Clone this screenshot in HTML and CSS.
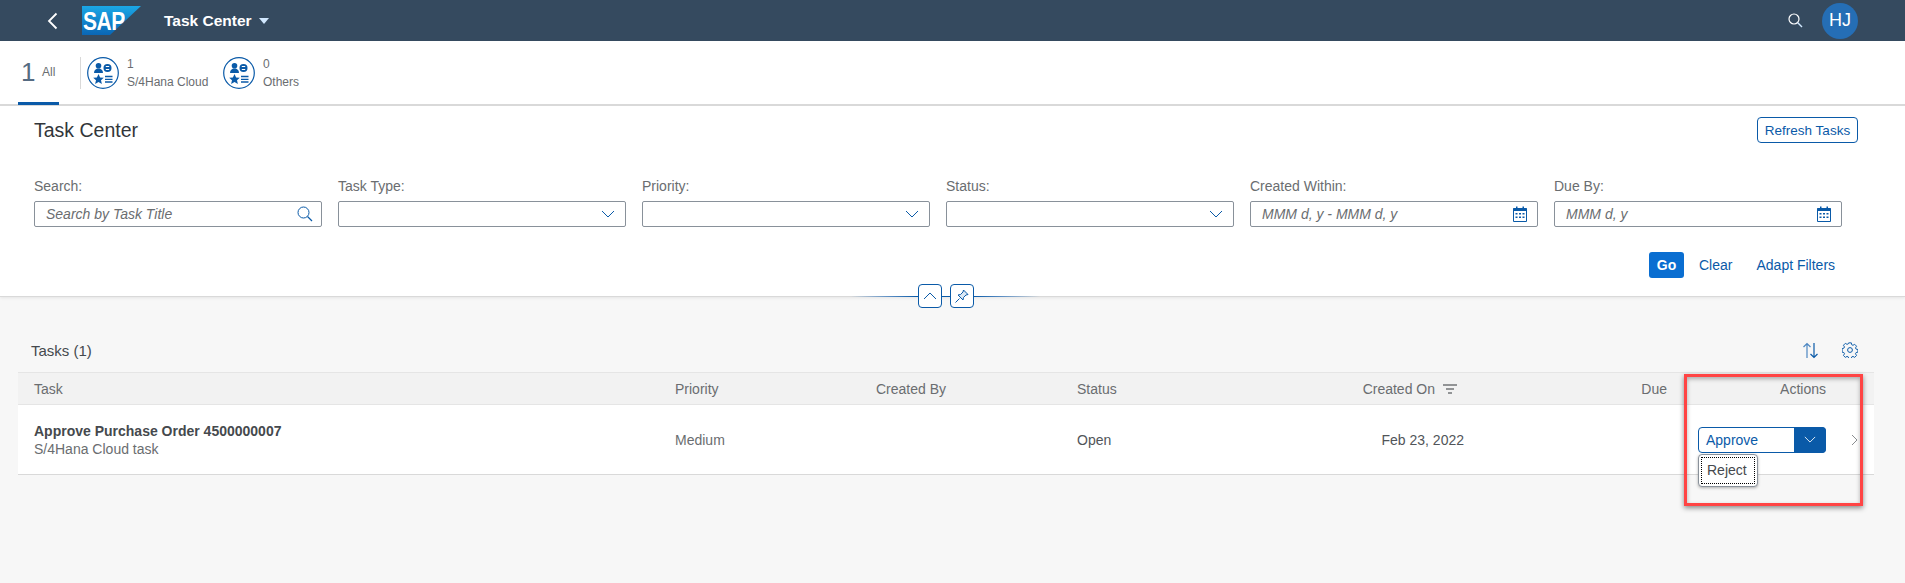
FILE: index.html
```html
<!DOCTYPE html>
<html>
<head>
  <title>Task Center</title>
  <link rel="stylesheet" href="styles.css">
</head>
<body>
  <svg class="icon-defs" width="0" height="0">
    <defs>
      <linearGradient id="sap-blue" x1="0" y1="0" x2="0" y2="1">
        <stop offset="0" stop-color="#1ba7e6"/>
        <stop offset="1" stop-color="#0a66b5"/>
      </linearGradient>
      <symbol id="calendar" viewBox="0 0 14 16">
        <path d="M.5 2.500h13v13H.5z" fill="none" stroke="#0a5aa8"/>
        <path d="M.5 2h13v3H.5zM3 .5h1.500v2H3zM9.500 .5H11v2H9.500z" fill="#0a5aa8"/>
        <path d="M2.500 7h2v1.500h-2zM6 7h2v1.500H6zM9.500 7h2v1.500h-2zM2.500 10.500h2V12h-2zM6 10.500h2V12H6zM9.500 10.500h2V12h-2z" fill="#0a5aa8"/>
      </symbol>
      <symbol id="chevron-down" viewBox="0 0 14 8">
        <path d="M1 1l6 6 6-6" fill="none" stroke="currentColor" stroke-width="1"/>
      </symbol>
      <symbol id="tab-people" viewBox="0 0 32 32">
        <circle cx="16" cy="16" r="15.300" fill="#fff" stroke="#0a5aa8" stroke-width="1.200"/>
        <circle cx="11.500" cy="8.800" r="2.800" fill="#0a5aa8"/>
        <path d="M7 16c0-3 1.800-4.500 4.500-4.500S16 13 16 16z" fill="#0a5aa8"/>
        <circle cx="20.500" cy="11" r="4" fill="#0a5aa8"/>
        <path d="M18.800 9.500h3.400M18.800 12.500h3.400" stroke="#fff" stroke-width="1"/>
        <path d="M11.500 17l1.600 3.500 3.700.3-2.800 2.500.9 3.700-3.400-2-3.400 2 .9-3.700-2.800-2.500 3.700-.3z" fill="#0a5aa8"/>
        <path d="M18 19.500h7.500M18 22.300h7.500M18 25h7.500" stroke="#0a5aa8" stroke-width="1.300"/>
      </symbol>
    </defs>
  </svg>

  <header class="shell-bar">
    <svg class="shell-back" width="11" height="18" viewBox="0 0 11 18"><path d="M9.500 1.500L2 9l7.500 7.500" fill="none" stroke="#fff" stroke-width="1.800"/></svg>
    <div class="sap-logo">
      <svg width="59" height="29" viewBox="0 0 59 29"><path d="M0 0h59L28 29H0z" fill="url(#sap-blue)"/></svg>
      <span class="sap-word">SAP</span>
    </div>
    <span class="shell-title">Task Center</span>
    <span class="shell-caret"></span>
    <svg class="shell-search" width="15" height="15" viewBox="0 0 15 15"><circle cx="6" cy="6" r="5" fill="none" stroke="#fff" stroke-width="1.200"/><path d="M9.500 9.500l4.500 4.500" stroke="#d1e8ff" stroke-width="1.400"/></svg>
    <div class="avatar">HJ</div>
  </header>

  <nav class="tab-bar">
    <div class="tab-all">
      <span class="tab-count">1</span>
      <span class="tab-label">All</span>
    </div>
    <div class="tab-sep"></div>
    <div class="tab-item">
      <svg width="32" height="32"><use href="#tab-people"/></svg>
      <div class="tab-text"><span>1</span><span>S/4Hana Cloud</span></div>
    </div>
    <div class="tab-item">
      <svg width="32" height="32"><use href="#tab-people"/></svg>
      <div class="tab-text"><span>0</span><span>Others</span></div>
    </div>
  </nav>

  <section class="filter-panel">
    <div class="panel-head">
      <h1>Task Center</h1>
      <button class="btn-outline">Refresh Tasks</button>
    </div>
    <div class="filter-grid">
      <div class="field">
        <label>Search:</label>
        <div class="input"><span class="placeholder">Search by Task Title</span>
          <svg class="input-search" width="16" height="16" viewBox="0 0 16 16"><circle cx="6.500" cy="6.500" r="5.500" fill="none" stroke="#0a5aa8" stroke-width="1"/><path d="M10.500 10.500l4.500 4.500" stroke="#0a5aa8" stroke-width="1.300"/></svg>
        </div>
      </div>
      <div class="field">
        <label>Task Type:</label>
        <div class="input"><span></span><svg class="input-caret" width="14" height="8"><use href="#chevron-down"/></svg></div>
      </div>
      <div class="field">
        <label>Priority:</label>
        <div class="input"><span></span><svg class="input-caret" width="14" height="8"><use href="#chevron-down"/></svg></div>
      </div>
      <div class="field">
        <label>Status:</label>
        <div class="input"><span></span><svg class="input-caret" width="14" height="8"><use href="#chevron-down"/></svg></div>
      </div>
      <div class="field">
        <label>Created Within:</label>
        <div class="input"><span class="placeholder">MMM d, y - MMM d, y</span><svg class="input-cal" width="14" height="16"><use href="#calendar"/></svg></div>
      </div>
      <div class="field">
        <label>Due By:</label>
        <div class="input"><span class="placeholder">MMM d, y</span><svg class="input-cal" width="14" height="16"><use href="#calendar"/></svg></div>
      </div>
    </div>
    <div class="filter-actions">
      <button class="btn-go">Go</button>
      <a class="link">Clear</a>
      <a class="link">Adapt Filters</a>
    </div>
  </section>

  <div class="collapse-bar">
    <button class="btn-square">
      <svg width="14" height="8" viewBox="0 0 14 8"><path d="M1 7l6-6 6 6" fill="none" stroke="#0a5aa8"/></svg>
    </button>
    <button class="btn-square">
      <svg width="14" height="14" viewBox="0 0 14 14"><path d="M8.500 1l4.500 4.500-2 .5-2.500 2.500-.5 2.500-5-5 2.500-.5L8 3z" fill="#dbe8f5" stroke="#0a5aa8"/><path d="M4.500 9.500L.5 13.500" stroke="#0a5aa8"/></svg>
    </button>
  </div>

  <main class="tasks">
    <div class="tasks-head">
      <span class="tasks-title">Tasks (1)</span>
      <div class="tasks-tools">
        <svg width="17" height="17" viewBox="0 0 17 17"><path d="M5 16V1.500M1.500 5L5 1.500 8.500 5" fill="none" stroke="#4d87c2" stroke-width="1.200"/><path d="M12 1v14.500M8.500 12l3.500 3.500 3.500-3.500" fill="none" stroke="#0a5aa8" stroke-width="1.200"/></svg>
        <svg width="16" height="16" viewBox="0 0 16 16"><path d="M6.600.7h2.800l.4 2 1.300.6 1.800-1.100 2 2-1.100 1.800.6 1.300 2 .4v0l-.1 2.800-1.900.4-.6 1.300 1.100 1.800-2 2-1.800-1.100-1.300.6-.4 1.900H6.600l-.4-1.900-1.300-.6-1.800 1.100-2-2 1.100-1.800-.6-1.300-1.900-.4V6.700l1.900-.4.600-1.300-1.100-1.800 2-2 1.800 1.100 1.300-.6z" fill="none" stroke="#0a5aa8" stroke-width="1" transform="translate(.4 .2) scale(.95)"/><circle cx="8" cy="8" r="2.400" fill="none" stroke="#0a5aa8"/></svg>
      </div>
    </div>
    <div class="table">
      <div class="row row-head">
        <div class="cell">Task</div>
        <div class="cell">Priority</div>
        <div class="cell">Created By</div>
        <div class="cell">Status</div>
        <div class="cell cell-right cell-created">Created On
          <svg width="14" height="10" viewBox="0 0 14 10"><path d="M0 1h14M3 5h8M5 9h4" stroke="#32363a" stroke-width="1.200"/></svg>
        </div>
        <div class="cell cell-right cell-due">Due</div>
        <div class="cell cell-right cell-actions">Actions</div>
        <div class="cell"></div>
      </div>
      <div class="row row-body">
        <div class="cell task-name"><strong>Approve Purchase Order 4500000007</strong><span>S/4Hana Cloud task</span></div>
        <div class="cell">Medium</div>
        <div class="cell"></div>
        <div class="cell cell-open">Open</div>
        <div class="cell cell-right cell-date">Feb 23, 2022</div>
        <div class="cell"></div>
        <div class="cell cell-right">
          <div class="split-btn">
            <span class="split-text">Approve</span>
            <span class="split-arrow"><svg width="12" height="7"><use href="#chevron-down"/></svg></span>
            <div class="split-menu"><span>Reject</span></div>
          </div>
        </div>
        <div class="cell cell-nav">
          <svg width="7" height="12" viewBox="0 0 7 12"><path d="M1 1l5 5-5 5" fill="none" stroke="#8a8d90"/></svg>
        </div>
      </div>
    </div>
  </main>

  <div class="highlight-box"></div>
</body>
</html>
```

FILE: styles.css
```css
html, body {
  margin: 0;
  padding: 0;
}

body {
  position: relative;
  height: 583px;
  overflow: hidden;
  background-color: #f7f7f7;
  font-family: "Liberation Sans", Arial, sans-serif;
  font-size: 14px;
  color: #32363a;
}

button {
  font-family: inherit;
  cursor: pointer;
}

.icon-defs {
  position: absolute;
}

/* top bar */
.shell-bar {
  display: flex;
  align-items: center;
  height: 41px;
  padding: 0 47px 0 47px;
  background-color: #354a5f;
  color: #fff;
}

.shell-back {
  margin-right: 24px;
}

.sap-logo {
  position: relative;
  width: 59px;
  height: 29px;
  margin-right: 23px;
}

.sap-word {
  position: absolute;
  left: 1px;
  top: 2px;
  font-size: 25px;
  line-height: 26px;
  font-weight: bold;
  letter-spacing: -0.5px;
  color: #fff;
  transform: scaleX(0.84);
  transform-origin: left center;
}

.shell-title {
  font-size: 15.500px;
  font-weight: bold;
}

.shell-caret {
  width: 0;
  height: 0;
  margin-left: 7px;
  border-left: 5px solid transparent;
  border-right: 5px solid transparent;
  border-top: 6px solid #d1e8ff;
}

.shell-search {
  margin-left: auto;
  margin-right: 19px;
}

.avatar {
  display: flex;
  align-items: center;
  justify-content: center;
  width: 36px;
  height: 36px;
  border-radius: 50%;
  background-color: #256eb5;
  font-size: 18px;
}

/* tabs */
.tab-bar {
  display: flex;
  align-items: center;
  height: 63px;
  background-color: #fff;
  border-bottom: 2px solid #d9d9d9;
  box-sizing: content-box;
  position: relative;
}

.tab-all {
  display: flex;
  align-items: center;
  width: 41px;
  height: 100%;
  margin-left: 18px;
  padding-left: 3px;
  box-sizing: border-box;
  border-bottom: 3px solid #0a5aa8;
  margin-bottom: -2px;
}

.tab-count {
  font-size: 26px;
  color: #556b82;
  width: 21px;
}

.tab-label,
.tab-text {
  font-size: 12px;
  color: #6a6d70;
}

.tab-sep {
  width: 1px;
  height: 32px;
  margin-left: 21px;
  margin-right: 6px;
  background-color: #d9d9d9;
}

.tab-item {
  display: flex;
  align-items: center;
  gap: 8px;
  width: 136px;
}

.tab-text {
  display: flex;
  flex-direction: column;
  gap: 4px;
}

/* filters */
.filter-panel {
  height: 191px;
  padding: 11px 47px 0 34px;
  box-sizing: border-box;
  background-color: #fff;
  border-bottom: 1px solid #d9d9d9;
  box-shadow: 0 1px 3px rgba(0, 0, 0, 0.08);
}

.panel-head {
  display: flex;
  justify-content: space-between;
  align-items: center;
  height: 26px;
}

.panel-head h1 {
  margin: 0;
  font-size: 19.500px;
  font-weight: normal;
  color: #32363a;
}

.btn-outline {
  width: 101px;
  height: 26px;
  padding: 0;
  border: 1px solid #0a5aa8;
  border-radius: 4px;
  background-color: #fff;
  font-size: 13.500px;
  color: #0a5aa8;
}

.filter-grid {
  display: grid;
  grid-template-columns: repeat(6, 288px);
  column-gap: 16px;
  margin-top: 35px;
}

.field label {
  display: block;
  height: 23px;
  font-size: 14px;
  line-height: 16px;
  color: #6a6d70;
}

.input {
  display: flex;
  align-items: center;
  justify-content: space-between;
  height: 26px;
  padding: 0 8px 0 11px;
  box-sizing: border-box;
  border: 1px solid #89919a;
  border-radius: 2px;
  background-color: #fff;
}

.placeholder {
  font-size: 14px;
  font-style: italic;
  color: #6a6d70;
}

.input-caret {
  color: #0a5aa8;
  margin-right: 2px;
}

.input-cal {
  margin-right: 2px;
}

.filter-actions {
  display: flex;
  align-items: center;
  height: 26px;
  margin-top: 25px;
  margin-right: -23px;
  padding-left: 1615px;
}

.btn-go {
  width: 35px;
  height: 26px;
  padding: 0;
  border: none;
  border-radius: 3px;
  background-color: #0a6ed1;
  color: #fff;
  font-size: 14px;
  font-weight: bold;
}

.link {
  font-size: 14px;
  color: #0a5aa8;
}

.btn-go + .link {
  margin-left: 15px;
}

.link + .link {
  margin-left: 24px;
}

.collapse-bar {
  position: relative;
  display: flex;
  justify-content: center;
  gap: 8px;
  height: 24px;
  margin-top: -13px;
  margin-right: 14px;
  background: linear-gradient(90deg, transparent 45%, #5d8fc4 47%, #0a5aa8 48.500%, #0a5aa8 51.500%, #5d8fc4 53%, transparent 55%) no-repeat 0 12px / 100% 1px;
}

.btn-square {
  display: flex;
  align-items: center;
  justify-content: center;
  width: 24px;
  height: 24px;
  padding: 0;
  border: 1px solid #0a5aa8;
  border-radius: 4px;
  background-color: #fff;
}

/* task table */
.tasks {
  padding: 0 31px 0 18px;
}

.tasks-head {
  display: flex;
  justify-content: space-between;
  align-items: center;
  height: 64px;
  padding: 20px 16px 0 13px;
  box-sizing: border-box;
}

.tasks-title {
  font-size: 15px;
  color: #45494d;
}

.tasks-tools {
  display: flex;
  align-items: center;
  gap: 23px;
}

.table {
  position: relative;
}

.row {
  display: grid;
  grid-template-columns: 657px 201px 201px 201px 210px 201px 153px 32px;
  align-items: center;
  box-sizing: border-box;
}

.row-head {
  height: 33px;
  background-color: #f2f2f2;
  border-top: 1px solid #e5e5e5;
  border-bottom: 1px solid #e5e5e5;
  color: #6a6d70;
}

.row-body {
  height: 70px;
  background-color: #fff;
  border-bottom: 1px solid #d9d9d9;
  color: #6a6d70;
}

.cell:first-child {
  padding-left: 16px;
}

.cell-right {
  text-align: right;
}

.cell-created {
  display: flex;
  justify-content: flex-end;
  align-items: center;
  gap: 8px;
  padding-right: 31px;
}

.cell-due {
  padding-right: 22px;
}

.cell-actions {
  padding-right: 16px;
}

.cell-date {
  padding-right: 24px;
  color: #515559;
}

.cell-open {
  color: #515559;
}

.task-name {
  display: flex;
  flex-direction: column;
  gap: 2px;
}

.task-name strong {
  color: #45494d;
}

.split-btn {
  position: relative;
  display: flex;
  width: 128px;
  height: 26px;
  margin-left: 9px;
  box-sizing: border-box;
  border: 1px solid #0a5aa8;
  border-radius: 4px;
  background-color: #fff;
  text-align: left;
}

.split-text {
  flex: 1;
  padding-left: 7px;
  line-height: 24px;
  color: #0a5aa8;
}

.split-arrow {
  display: flex;
  align-items: center;
  justify-content: center;
  width: 32px;
  margin: -1px -1px -1px 0;
  border-radius: 0 4px 4px 0;
  background-color: #0a5aa8;
  color: #fff;
}

.split-menu {
  position: absolute;
  left: -1px;
  top: 26px;
  padding: 2px;
  border: 1px solid #89919a;
  border-radius: 4px;
  background-color: #fff;
  box-shadow: 0 1px 3px rgba(0, 0, 0, 0.3);
}

.split-menu span {
  display: block;
  width: 54px;
  padding: 0 0 0 6px;
  box-sizing: border-box;
  line-height: 27px;
  outline: 1px dotted #000;
  outline-offset: -1px;
  color: #45494d;
}

.cell-nav {
  display: flex;
  justify-content: center;
  padding-right: 8px;
}

/* red marker drawn on the screenshot */
.highlight-box {
  position: absolute;
  left: 1684px;
  top: 374px;
  width: 179px;
  height: 132px;
  box-sizing: border-box;
  border: 3px solid #ff4444;
  box-shadow: 0 2px 5px rgba(0, 0, 0, 0.45), inset 0 2px 4px rgba(0, 0, 0, 0.3);
}
```
